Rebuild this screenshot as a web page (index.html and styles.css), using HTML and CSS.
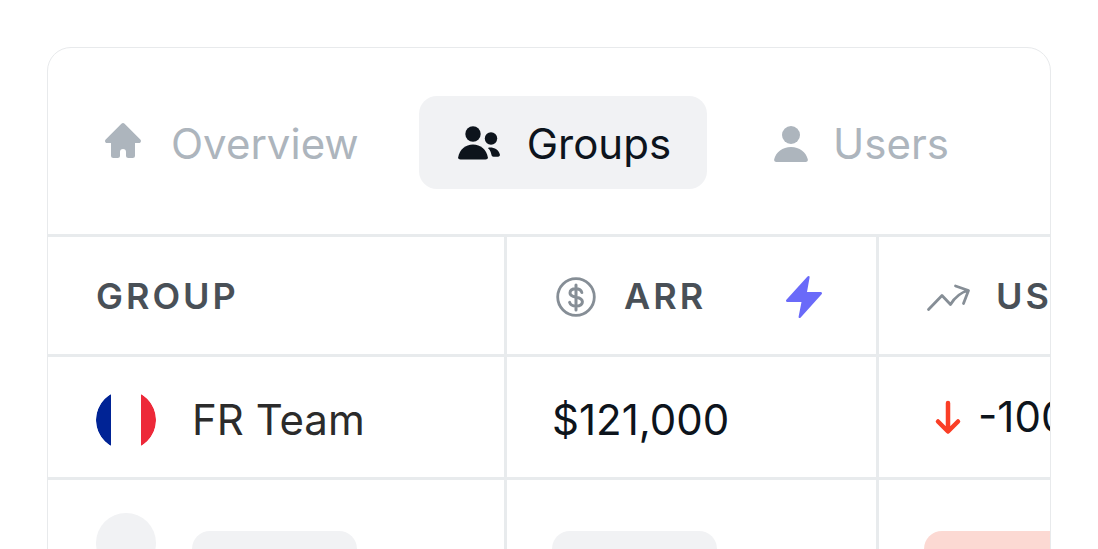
FILE: index.html
```html
<!DOCTYPE html>
<html lang="en">
<head>
    <meta charset="UTF-8">
    <meta name="viewport" content="width=device-width, initial-scale=1.0">
    <title>Groups</title>
    <link rel="stylesheet" href="styles.css">
</head>
<body>
    <div class="card">
        <nav class="tabs">
            <button type="button" class="tab">
                <svg class="icon" viewBox="0 0 48 48" fill="currentColor">
                    <path d="M22.4 3.800a2.400 2.400 0 0 1 3.200 0L41.300 19.400c1.300 1.300.6 3.600-1.400 3.600H36v12.500a2.500 2.500 0 0 1-2.500 2.500H29.500a2.500 2.500 0 0 1-2.500-2.500V32a3 3 0 0 0-6 0v3.500a2.500 2.500 0 0 1-2.500 2.500H14.500a2.500 2.500 0 0 1-2.500-2.500V23H8.100c-2 0-2.700-2.300-1.400-3.600z"/>
                </svg>
                Overview
            </button>
            <button type="button" class="tab active">
                <svg class="icon" viewBox="0 0 48 48" fill="currentColor">
                    <circle cx="18" cy="14" r="7.700"/>
                    <circle cx="36" cy="18.500" r="6.200"/>
                    <path d="M5.500 39.500c-1.500 0-2.500-1-2.300-2.300C4.500 29.500 10.500 24.500 18 24.500s13.500 5 14.800 12.700c.2 1.300-.8 2.300-2.300 2.300z"/>
                    <path d="M34 27.500c5.500-.3 9.700 2.300 10.900 7 .3 1.200-.6 2.200-1.900 2.200h-4.500c-1.200 0-1.700-.6-2-1.700-.6-2.600-1.500-5-3-6.200-.6-.5-.3-1.200.5-1.300z"/>
                </svg>
                Groups
            </button>
            <button type="button" class="tab tab-users">
                <svg class="icon" viewBox="0 0 48 48" fill="currentColor">
                    <circle cx="24" cy="15" r="9"/>
                    <path d="M9.500 42c-1.700 0-2.700-1.200-2.300-2.700C9 32 15.500 27 24 27s15 5 16.800 12.300c.4 1.500-.6 2.700-2.300 2.700z"/>
                </svg>
                Users
            </button>
        </nav>

        <table class="grid">
            <colgroup>
                <col class="col-group">
                <col class="col-arr">
                <col class="col-usage">
            </colgroup>
            <thead>
                <tr>
                    <th scope="col">Group</th>
                    <th scope="col">
                        <div class="cell">
                            <svg class="icon muted" viewBox="0 1 48 48" fill="none" stroke="currentColor" stroke-width="2.800" stroke-linecap="round" stroke-linejoin="round">
                                <circle cx="24" cy="25" r="18.300"/>
                                <path stroke-width="3" d="M24 13v25M29.800 20.500c-.6-2.400-2.700-3.700-5.800-3.700-3.500 0-6 1.500-6 4.200 0 2.500 2.200 3.500 6 4.200 4.200.7 6.400 1.800 6.400 4.600s-2.800 4.300-6.400 4.300c-3.200 0-5.600-1.200-6.400-3.700"/>
                            </svg>
                            ARR
                            <svg class="icon bolt" viewBox="0 1 48 48" fill="currentColor">
                                <path d="M27.500 4.600c1-1.200 2.300-.6 2.100.8L27 20h13.500c1.500 0 2 1.200 1.100 2.300L20.700 45.500c-1 1.100-2.300.6-2.100-.8L21.500 30H7.500c-1.500 0-2-1.200-1.100-2.300z"/>
                            </svg>
                        </div>
                    </th>
                    <th scope="col">
                        <div class="cell">
                            <svg class="icon muted" viewBox="0 1 48 48" fill="none" stroke="currentColor" stroke-width="2.800" stroke-linecap="round" stroke-linejoin="round">
                                <path d="M4.500 37.500L18 23.500l8.500 9C31 25 36.500 20.500 44 18.500M31.500 14L44.500 18.500L39.500 31.500"/>
                            </svg>
                            Usage
                        </div>
                    </th>
                </tr>
            </thead>
            <tbody>
                <tr>
                    <td>
                        <div class="cell team">
                            <svg class="avatar" viewBox="0 0 60 60">
                                <path fill="#002395" d="M15 4a30 30 0 0 0 0 52z"/>
                                <path fill="#fff" d="M15 4a30 30 0 0 1 30 0v52a30 30 0 0 1-30 0z"/>
                                <path fill="#ed2939" d="M45 4a30 30 0 0 1 0 52z"/>
                            </svg>
                            FR Team
                        </div>
                    </td>
                    <td>$121,000</td>
                    <td class="trend">
                        <div class="cell">
                            <svg class="icon down" viewBox="0 0 48 48" fill="none" stroke="currentColor" stroke-width="4.500" stroke-linecap="round" stroke-linejoin="round">
                                <path d="M24 10v28M14 28.500l10 10 10-10"/>
                            </svg>
                            -100%
                        </div>
                    </td>
                </tr>
                <tr class="placeholder">
                    <td>
                        <div class="cell team">
                            <span class="avatar"></span>
                            <span class="bar"></span>
                        </div>
                    </td>
                    <td><div class="bar"></div></td>
                    <td><div class="bar bar-red"></div></td>
                </tr>
            </tbody>
        </table>
    </div>
</body>
</html>
```
FILE: styles.css
```css
* { box-sizing: border-box; }
body { font-family: Inter, sans-serif; font-size: 42px; line-height: 51px; margin: 0; padding: 47px; height: 100vh; overflow: hidden; background: #fff; color: #0d141c; }
.card { border: 1px solid #e8eaec; border-radius: 24px; overflow: hidden; }

.tabs { display: flex; gap: 24px; padding: 48px 15px 45px; border-bottom: 3px solid #e8ebed; }
.tab { display: flex; align-items: center; flex: none; gap: 24px; padding: 22px 36px 20px; border: none; border-radius: 18px; background: none; color: #adb5bd; font: inherit; cursor: pointer; }
.tab.active { background: #f1f2f4; color: #0d141c; }
.tab-users { gap: 18px; }
.icon { width: 48px; height: 48px; flex: none; }

.grid { width: 1251px; table-layout: fixed; border-collapse: separate; border-spacing: 0; }
.col-group { width: 459px; }
.col-arr { width: 372px; }
th, td { padding: 0 45px; border-right: 3px solid #e8ebed; border-bottom: 3px solid #e8ebed; text-align: left; vertical-align: middle; white-space: nowrap; }
th:first-child, td:first-child { padding-left: 48px; }
th { height: 120px; padding-top: 2px; color: #495057; font-size: 36px; font-weight: 600; letter-spacing: 3px; text-transform: uppercase; }
td { height: 123px; padding-top: 6px; line-height: 50px; }
.cell { display: flex; align-items: center; gap: 24px; }
.team { gap: 36px; color: #2b2b2b; }
.trend { padding-top: 0; }
.trend .cell { gap: 6px; }
.muted { color: #868e96; }
.bolt { margin-left: auto; margin-right: 3px; color: #6a6af9; }
.down { color: #fa3e26; }

.avatar { width: 60px; height: 60px; flex: none; border-radius: 50%; }
.bar { display: block; width: 165px; height: 36px; border-radius: 18px; background: #f1f2f4; }
.bar-red { background: #fcd9d3; }
.placeholder .avatar { background: #f1f2f4; }
.placeholder .bar { margin-top: 12px; }
```
